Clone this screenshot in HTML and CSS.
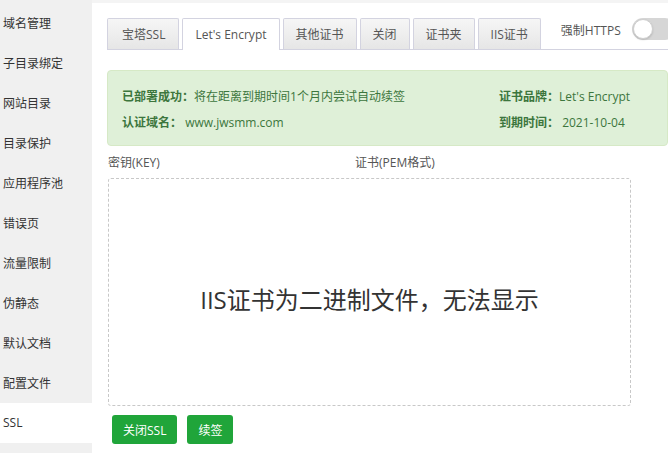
FILE: index.html
```html
<!DOCTYPE html>
<html lang="zh-CN">
<head>
<meta charset="utf-8">
<title>SSL</title>
<link rel="stylesheet" href="styles.css">
</head>
<body>
<div class="layout">
  <nav class="side">
    <div class="side-item">域名管理</div>
    <div class="side-item">子目录绑定</div>
    <div class="side-item">网站目录</div>
    <div class="side-item">目录保护</div>
    <div class="side-item">应用程序池</div>
    <div class="side-item">错误页</div>
    <div class="side-item">流量限制</div>
    <div class="side-item">伪静态</div>
    <div class="side-item">默认文档</div>
    <div class="side-item">配置文件</div>
    <div class="side-item active">SSL</div>
  </nav>
  <main class="main">
    <div class="tabbar">
      <div class="tab wide">宝塔SSL</div>
      <div class="tab on">Let's Encrypt</div>
      <div class="tab">其他证书</div>
      <div class="tab">关闭</div>
      <div class="tab">证书夹</div>
      <div class="tab">IIS证书</div>
      <div class="force">
        <span class="force-label">强制HTTPS</span>
        <span class="switch"><span class="knob"></span></span>
      </div>
    </div>
    <div class="alert">
      <div class="cell"><b>已部署成功：</b>将在距离到期时间1个月内尝试自动续签</div>
      <div class="cell"><b>证书品牌：</b>Let's Encrypt</div>
      <div class="cell"><b>认证域名：</b> www.jwsmm.com</div>
      <div class="cell"><b>到期时间：</b> 2021-10-04</div>
    </div>
    <div class="labels">
      <span class="lbl key">密钥(KEY)</span>
      <span class="lbl">证书(PEM格式)</span>
    </div>
    <div class="certbox">IIS证书为二进制文件，无法显示</div>
    <div class="actions">
      <button class="btn">关闭SSL</button>
      <button class="btn">续签</button>
    </div>
  </main>
</div>
</body>
</html>
```
FILE: styles.css
```css
html, body {
  margin: 0;
  padding: 0;
  background: #fff;
  overflow: hidden;
}
body {
  font-family: "Open Sans", "Noto Sans CJK SC", sans-serif;
  font-size: 12px;
  color: #555;
  width: 668px;
  height: 453px;
}
.layout {
  display: flex;
  height: 453px;
}
.side {
  width: 92px;
  flex: none;
  background: #f0f0f0;
  padding-top: 4px;
}
.side-item {
  height: 40px;
  line-height: 40px;
  padding-left: 3px;
  color: #333;
  font-size: 12px;
  white-space: nowrap;
}
.side-item.active {
  background: #fff;
  margin-top: -1px;
}
.main {
  flex: 1;
  min-width: 0;
  border-top: 3px solid #f4f4f4;
  padding: 15px 0 0 15px;
  overflow: hidden;
}
.tabbar {
  display: flex;
  align-items: flex-end;
  gap: 3px;
  height: 31px;
  border-bottom: 1px solid #d3d3e0;
  width: 600px;
}
.tab {
  height: 30px;
  line-height: 31px;
  padding: 0 12px;
  border: 1px solid #d3d3e0;
  border-bottom: none;
  border-radius: 2px 2px 0 0;
  background: linear-gradient(#f6f6f6, #e6e6e6);
  color: #555;
  white-space: nowrap;
}
.tab.wide {
  padding: 0 13px 0 14px;
}
.tab.on {
  background: #fff;
  height: 31px;
  margin-bottom: -1px;
}
.force {
  display: flex;
  align-items: flex-start;
  align-self: flex-start;
  margin-left: 17px;
  gap: 11px;
  white-space: nowrap;
}
.force-label {
  margin-top: 4px;
  line-height: 18px;
  color: #555;
}
.switch {
  position: relative;
  display: block;
  width: 44px;
  height: 22px;
  margin-top: 0;
  border-radius: 11px;
  background: #d6d6d6;
}
.knob {
  position: absolute;
  left: 1px;
  top: 1px;
  width: 18px;
  height: 18px;
  border-radius: 50%;
  background: #fff;
  border: 1px solid #cfcfcf;
  box-shadow: 0 1px 2px rgba(0,0,0,.15);
}
.alert {
  margin-top: 20px;
  width: 531px;
  padding: 13px 14px 9px;
  border: 1px solid #d6e9c6;
  border-radius: 4px;
  background: #dff0d8;
  color: #3c763d;
  display: grid;
  grid-template-columns: 377px 1fr;
  line-height: 26px;
}
.alert b {
  font-weight: bold;
}
.cell {
  white-space: nowrap;
}
.labels {
  display: flex;
  margin: 7px 0 0 1px;
  height: 20px;
  line-height: 20px;
  color: #555;
}
.lbl.key {
  width: 247px;
}
.certbox {
  box-sizing: border-box;
  margin: 5px 0 0 1px;
  width: 523px;
  height: 228px;
  padding-top: 12px;
  border: 1px dashed #c8c8c8;
  border-radius: 3px;
  display: flex;
  align-items: center;
  justify-content: center;
  font-size: 24px;
  color: #333;
}
.actions {
  display: flex;
  gap: 10px;
  margin: 9px 0 0 5px;
}
.btn {
  height: 29px;
  padding: 0 11px;
  border: none;
  border-radius: 3px;
  background: #20a53a;
  color: #fff;
  font-family: "Open Sans", "Noto Sans CJK SC", sans-serif;
  font-size: 12px;
  cursor: pointer;
}
```
